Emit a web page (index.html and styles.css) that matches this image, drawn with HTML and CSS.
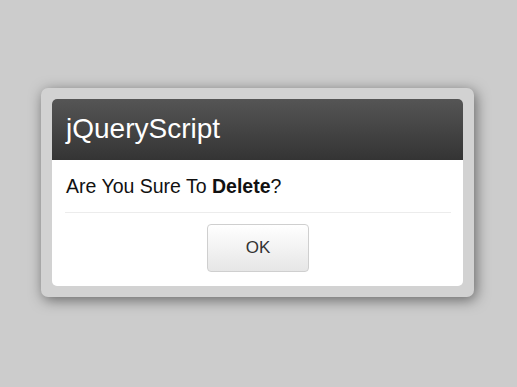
FILE: index.html
```html
<!DOCTYPE html>
<html lang="en">
<head>
  <meta charset="UTF-8" />
  <meta name="viewport" content="width=device-width, initial-scale=1.0"/>
  <title>Confirm Dialog</title>
  <link rel="stylesheet" href="styles.css">
</head>
<body>
  <div class="overlay">
    <div class="dialog-frame">
      <div class="dialog">
        <div class="dialog-header">jQueryScript</div>
        <div class="dialog-body">
          <p class="dialog-message">Are You Sure To <b>Delete</b>?</p>
        </div>
        <div class="dialog-footer">
          <button type="button" class="btn-ok">OK</button>
        </div>
      </div>
    </div>
  </div>
</body>
</html>
```

FILE: styles.css
```css
html, body {
  margin: 0;
  height: 100%;
}
body {
  font-family: "Liberation Sans", Arial, sans-serif;
  background-color: #cccccc;
}
.overlay {
  display: flex;
  align-items: center;
  justify-content: center;
  height: 100%;
  padding: 0 2px 3px 0;
  box-sizing: border-box;
}
.dialog-frame {
  width: 433px;
  padding: 11px;
  box-sizing: border-box;
  background-color: #d2d2d2;
  border-radius: 7px;
  box-shadow: 2px 3px 14px rgba(0, 0, 0, 0.5);
}
.dialog {
  background: #fff;
  border-radius: 5px;
  overflow: hidden;
}
.dialog-header {
  height: 61px;
  display: flex;
  align-items: center;
  padding-left: 14px;
  background: linear-gradient(#555555, #343434);
  color: #fff;
  font-size: 28px;
}
.dialog-body {
  margin: 0 12px 0 13px;
  padding: 15px 0 14px;
  border-bottom: 1px solid #ececec;
}
.dialog-message {
  margin: 0 0 0 1px;
  font-size: 19.5px;
  line-height: 23px;
  color: #111;
}
.dialog-footer {
  display: flex;
  justify-content: center;
  padding: 11px 0 14px;
}
.btn-ok {
  width: 102px;
  height: 48px;
  margin-left: 1px;
  font-family: "Liberation Sans", Arial, sans-serif;
  font-size: 17px;
  color: #333;
  background: linear-gradient(#ffffff, #e6e6e6);
  border: 1px solid #cfcfcf;
  border-radius: 4px;
  cursor: pointer;
}
```
